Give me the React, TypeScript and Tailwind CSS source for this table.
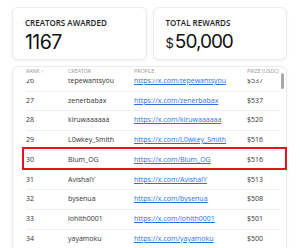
import React from "react";

const rows = [
  { rank: 26, name: "tepewantsyou", prize: 537 },
  { rank: 27, name: "zenerbabax", prize: 537 },
  { rank: 28, name: "kiruwaaaaaa", prize: 520 },
  { rank: 29, name: "L0wkey_Smith", prize: 516 },
  { rank: 30, name: "Blum_OG", prize: 516 },
  { rank: 31, name: "AvishaiY", prize: 513 },
  { rank: 32, name: "bysenua", prize: 508 },
  { rank: 33, name: "lohith0001", prize: 501 },
  { rank: 34, name: "yayamoku", prize: 500 },
  { rank: 35, name: "cryptoh", prize: 498 },
];

export default function App() {
  return (
    <div
      className="relative w-[300px] h-[248px] overflow-hidden bg-white pt-[7px] pl-[12px] pr-[13px]"
      style={{ fontFamily: '"Open Sans", "Noto Sans", sans-serif' }}
    >
      {/* STAT CARDS */}
      <div className="grid grid-cols-2 gap-[6px]">
        <div className="h-[53px] rounded-[6px] border border-[#ececec] bg-white px-[12px] pt-[10px] shadow-[0_1px_3px_rgba(0,0,0,0.06)]">
          <div className="text-[8px] font-semibold uppercase leading-[10px] text-[#222]">Creators Awarded</div>
          <div className="mt-[2px] font-['Inter'] text-[19.5px] font-normal leading-[24px] tracking-[-0.6px] text-[#111]">1167</div>
        </div>
        <div className="h-[53px] rounded-[6px] border border-[#ececec] bg-white px-[12px] pt-[10px] shadow-[0_1px_3px_rgba(0,0,0,0.06)]">
          <div className="text-[8px] font-semibold uppercase leading-[10px] text-[#222]">Total Rewards</div>
          <div className="mt-[2px] flex items-baseline font-['Inter'] font-normal leading-[24px] text-[#111]">
            <span className="mr-[1px] text-[13px]">$</span>
            <span className="text-[19px] tracking-[-1px]">50,000</span>
          </div>
        </div>
      </div>

      {/* TABLE */}
      <div className="relative mt-[6px] h-[200px] rounded-[6px] border border-[#ececec] bg-white pl-[13px] pr-[6px] shadow-[0_1px_3px_rgba(0,0,0,0.06)]">
        <div className="relative z-10 grid h-[12px] grid-cols-[42px_66px_113px_1fr] items-start whitespace-nowrap bg-white text-[5.5px] uppercase leading-[8px] tracking-[-0.15px] text-[#9a9a9a]">
          <span>Rank ↑</span>
          <span>Creator</span>
          <span>Profile</span>
          <span>Prize (USDC)</span>
        </div>
        <div className="h-[180px] overflow-hidden">
          <div className="-mt-[7px]">
            {rows.map((r) => (
              <div
                key={r.rank}
                className="grid h-[19.7px] grid-cols-[42px_66px_113px_1fr] items-center whitespace-nowrap border-b border-[#efefef] text-[7px] text-[#333]"
              >
                <span>{r.rank}</span>
                <span>{r.name}</span>
                <span className="text-[#2f6fdc] underline">https://x.com/{r.name}</span>
                <span>${r.prize}</span>
              </div>
            ))}
          </div>
        </div>
        {/* scrollbar thumb */}
        <div className="absolute right-[2px] top-[6px] h-[16px] w-[3px] rounded-full bg-[#a8a8a8]" />
      </div>

      {/* highlight */}
      <div className="absolute left-[22px] top-[147px] h-[23px] w-[265px] border-2 border-[#e3161e]" />
    </div>
  );
}
